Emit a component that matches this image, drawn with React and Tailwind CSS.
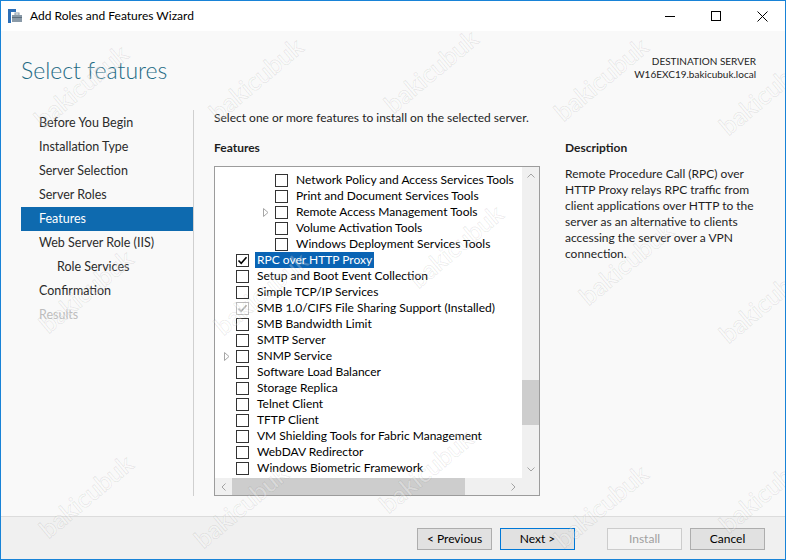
import React from "react";

const navItems = [
  { label: "Before You Begin" },
  { label: "Installation Type" },
  { label: "Server Selection" },
  { label: "Server Roles" },
  { label: "Features", active: true },
  { label: "Web Server Role (IIS)" },
  { label: "Role Services", sub: true },
  { label: "Confirmation" },
  { label: "Results", disabled: true },
];

const features = [
  { label: "Network Policy and Access Services Tools", level: 1 },
  { label: "Print and Document Services Tools", level: 1 },
  { label: "Remote Access Management Tools", level: 1, expand: true },
  { label: "Volume Activation Tools", level: 1 },
  { label: "Windows Deployment Services Tools", level: 1 },
  { label: "RPC over HTTP Proxy", checked: true, selected: true },
  { label: "Setup and Boot Event Collection" },
  { label: "Simple TCP/IP Services" },
  { label: "SMB 1.0/CIFS File Sharing Support (Installed)", checked: true, disabled: true },
  { label: "SMB Bandwidth Limit" },
  { label: "SMTP Server" },
  { label: "SNMP Service", expand: true },
  { label: "Software Load Balancer" },
  { label: "Storage Replica" },
  { label: "Telnet Client" },
  { label: "TFTP Client" },
  { label: "VM Shielding Tools for Fabric Management" },
  { label: "WebDAV Redirector" },
  { label: "Windows Biometric Framework" },
];

// watermark centres, roughly where they sit on the screenshot
const marks = [
  [80, 85], [255, 78], [430, 70], [600, 78], [765, 92],
  [85, 290], [260, 292], [455, 245], [625, 262], [765, 300],
  [85, 495], [240, 505], [425, 470], [600, 505], [765, 490],
];

function Checkbox({ checked, disabled }) {
  return (
    <div
      className={`flex h-[13px] w-[13px] shrink-0 items-center justify-center border bg-white ${
        disabled ? "border-[#bcbcbc]" : "border-[#333333]"
      }`}
    >
      {checked && (
        <svg width="11" height="11" viewBox="0 0 11 11">
          <path
            d="M1.5 5.5 L4.2 8.3 L9.5 2.2"
            fill="none"
            stroke={disabled ? "#a8a8a8" : "#000"}
            strokeWidth="1.6"
          />
        </svg>
      )}
    </div>
  );
}

function Expander() {
  return (
    <svg width="6" height="9" viewBox="0 0 6 9">
      <path d="M0.5 0.5 L5 4.5 L0.5 8.5 Z" fill="none" stroke="#a6a6a6" />
    </svg>
  );
}

function FeatureRow({ item }) {
  return (
    <div
      className={`flex h-[16px] items-center whitespace-nowrap ${
        item.level === 1 ? "pl-[47px]" : "pl-[8px]"
      }`}
    >
      <div className="flex w-[13px] shrink-0 items-center pl-[1px]">
        {item.expand && <Expander />}
      </div>
      <Checkbox checked={item.checked} disabled={item.disabled} />
      <span
        className={`ml-[6px] px-[2px] leading-[16px] ${
          item.selected ? "bg-[#0a64b4] text-white" : "text-[#000]"
        }`}
      >
        {item.label}
      </span>
    </div>
  );
}

function Button({ children, primary, disabled }) {
  return (
    <button
      className={`h-[22px] w-[75px] border text-[12px] ${
        disabled
          ? "border-[#cccccc] bg-[#f4f4f4] text-[#a0a0a0]"
          : primary
          ? "border-[#0078d7] bg-[#e1e1e1] text-[#000]"
          : "border-[#adadad] bg-[#e1e1e1] text-[#000]"
      }`}
    >
      {children}
    </button>
  );
}

export default function App() {
  return (
    <div className="relative flex h-[560px] w-[786px] flex-col overflow-hidden border border-[#1883d7] bg-[#f9f9f9] font-['Lato','Liberation_Sans',sans-serif] text-[12px] text-[#1e1e1e]">
      {/* Title bar */}
      <div className="flex h-[30px] shrink-0 items-center bg-white">
        <svg className="ml-[7px]" width="14" height="14" viewBox="0 0 14 14">
          <rect x="0" y="0" width="3" height="14" fill="#2e6fb6" />
          <rect x="0" y="0" width="8" height="3" fill="#2e6fb6" />
          <rect x="4" y="6" width="10" height="7" fill="#8a9aa8" />
          <rect x="7" y="4" width="4" height="2" fill="none" stroke="#8a9aa8" />
          <rect x="4" y="8" width="10" height="1" fill="#5d6f7e" />
        </svg>
        <span className="ml-[8px] text-[12px] text-[#000]">Add Roles and Features Wizard</span>
        <div className="ml-auto flex h-full">
          <div className="flex w-[46px] items-center justify-center">
            <svg width="10" height="10" viewBox="0 0 10 10">
              <line x1="0" y1="5.5" x2="10" y2="5.5" stroke="#000" />
            </svg>
          </div>
          <div className="flex w-[46px] items-center justify-center">
            <svg width="10" height="10" viewBox="0 0 10 10">
              <rect x="0.5" y="0.5" width="9" height="9" fill="none" stroke="#000" />
            </svg>
          </div>
          <div className="flex w-[46px] items-center justify-center">
            <svg width="11" height="11" viewBox="0 0 11 11">
              <path d="M0.5 0.5 L10.5 10.5 M10.5 0.5 L0.5 10.5" stroke="#000" />
            </svg>
          </div>
        </div>
      </div>

      {/* Header */}
      <div className="flex h-[76px] shrink-0 justify-between pl-[20px] pr-[29px] pt-[23px]">
        <h1 className="text-[23px] font-light leading-[32px] text-[#1f6b85]">Select features</h1>
        <div className="text-right text-[10px] leading-[13px] text-[#1e1e1e]">
          <div className="pt-[1px]">DESTINATION SERVER</div>
          <div>W16EXC19.bakicubuk.local</div>
        </div>
      </div>

      {/* Main */}
      <div className="flex h-[409px] shrink-0">
        <nav className="ml-[20px] w-[172px] pt-[4px]">
          {navItems.map((item) => (
            <div
              key={item.label}
              className={`flex h-[24px] items-center ${item.sub ? "pl-[36px]" : "pl-[18px]"} ${
                item.active ? "bg-[#0e6aaf] text-white" : item.disabled ? "text-[#bdbdbd]" : "text-[#2b2b2b]"
              } text-[12.5px]`}
            >
              {item.label}
            </div>
          ))}
        </nav>
        <div className="mt-[3px] h-[386px] w-px bg-[#d0d0d0]" />

        <div className="flex-1 pl-[20px] pt-[3px]">
          <p className="leading-[16px] text-[#1e1e1e]">
            Select one or more features to install on the selected server.
          </p>
          <div className="mt-[14px] flex gap-[25px]">
            <div className="w-[326px]">
              <div className="font-bold leading-[16px] text-[#1e1e1e]">Features</div>
              <div className="mt-[10px] flex h-[330px] flex-col border border-[#9c9c9c] bg-white">
                <div className="flex h-[311px]">
                  <div className="flex-1 overflow-hidden pt-[5px]">
                    {features.map((f) => (
                      <FeatureRow key={f.label} item={f} />
                    ))}
                  </div>
                  {/* vertical scrollbar */}
                  <div className="flex w-[17px] flex-col bg-[#f0f0f0]">
                    <div className="flex h-[17px] items-center justify-center">
                      <svg width="8" height="5" viewBox="0 0 8 5">
                        <path d="M0.5 4.5 L4 1 L7.5 4.5" fill="none" stroke="#a3a3a3" />
                      </svg>
                    </div>
                    <div className="h-[196px]" />
                    <div className="h-[45px] bg-[#cdcdcd]" />
                    <div className="flex-1" />
                    <div className="flex h-[17px] items-center justify-center">
                      <svg width="8" height="5" viewBox="0 0 8 5">
                        <path d="M0.5 0.5 L4 4 L7.5 0.5" fill="none" stroke="#a3a3a3" />
                      </svg>
                    </div>
                  </div>
                </div>
                {/* horizontal scrollbar */}
                <div className="flex h-[17px] bg-[#f0f0f0]">
                  <div className="flex w-[17px] items-center justify-center">
                    <svg width="5" height="8" viewBox="0 0 5 8">
                      <path d="M4.5 0.5 L1 4 L4.5 7.5" fill="none" stroke="#a3a3a3" />
                    </svg>
                  </div>
                  <div className="w-[233px] bg-[#cdcdcd]" />
                  <div className="flex-1" />
                  <div className="flex w-[17px] items-center justify-center">
                    <svg width="5" height="8" viewBox="0 0 5 8">
                      <path d="M0.5 0.5 L4 4 L0.5 7.5" fill="none" stroke="#a3a3a3" />
                    </svg>
                  </div>
                  <div className="w-[17px]" />
                </div>
              </div>
            </div>
            <div className="w-[200px]">
              <div className="font-bold leading-[16px] text-[#1e1e1e]">Description</div>
              <p className="mt-[10px] leading-[16px] text-[#1e1e1e]">
                Remote Procedure Call (RPC) over
                <br />
                HTTP Proxy relays RPC traffic from
                <br />
                client applications over HTTP to the
                <br />
                server as an alternative to clients
                <br />
                accessing the server over a VPN
                <br />
                connection.
              </p>
            </div>
          </div>
        </div>
      </div>

      {/* Footer */}
      <div className="flex flex-1 items-start justify-end border-t border-[#dcdcdc] bg-[#f0f0f0] pr-[20px] pt-[11px]">
        <div className="flex gap-[8px]">
          <Button>&lt; Previous</Button>
          <Button primary>Next &gt;</Button>
        </div>
        <div className="ml-[32px] flex gap-[8px]">
          <Button disabled>Install</Button>
          <Button>Cancel</Button>
        </div>
      </div>

      {/* watermark overlay */}
      <div className="pointer-events-none absolute inset-0">
        {marks.map(([x, y], i) => (
          <span
            key={i}
            className="absolute -translate-x-1/2 -translate-y-1/2 -rotate-[40deg] whitespace-nowrap text-[25px] font-semibold text-[rgba(255,255,255,0.25)] [-webkit-text-stroke:1px_rgba(0,0,0,0.075)]"
            style={{ left: x, top: y }}
          >
            bakicubuk
          </span>
        ))}
      </div>
    </div>
  );
}
